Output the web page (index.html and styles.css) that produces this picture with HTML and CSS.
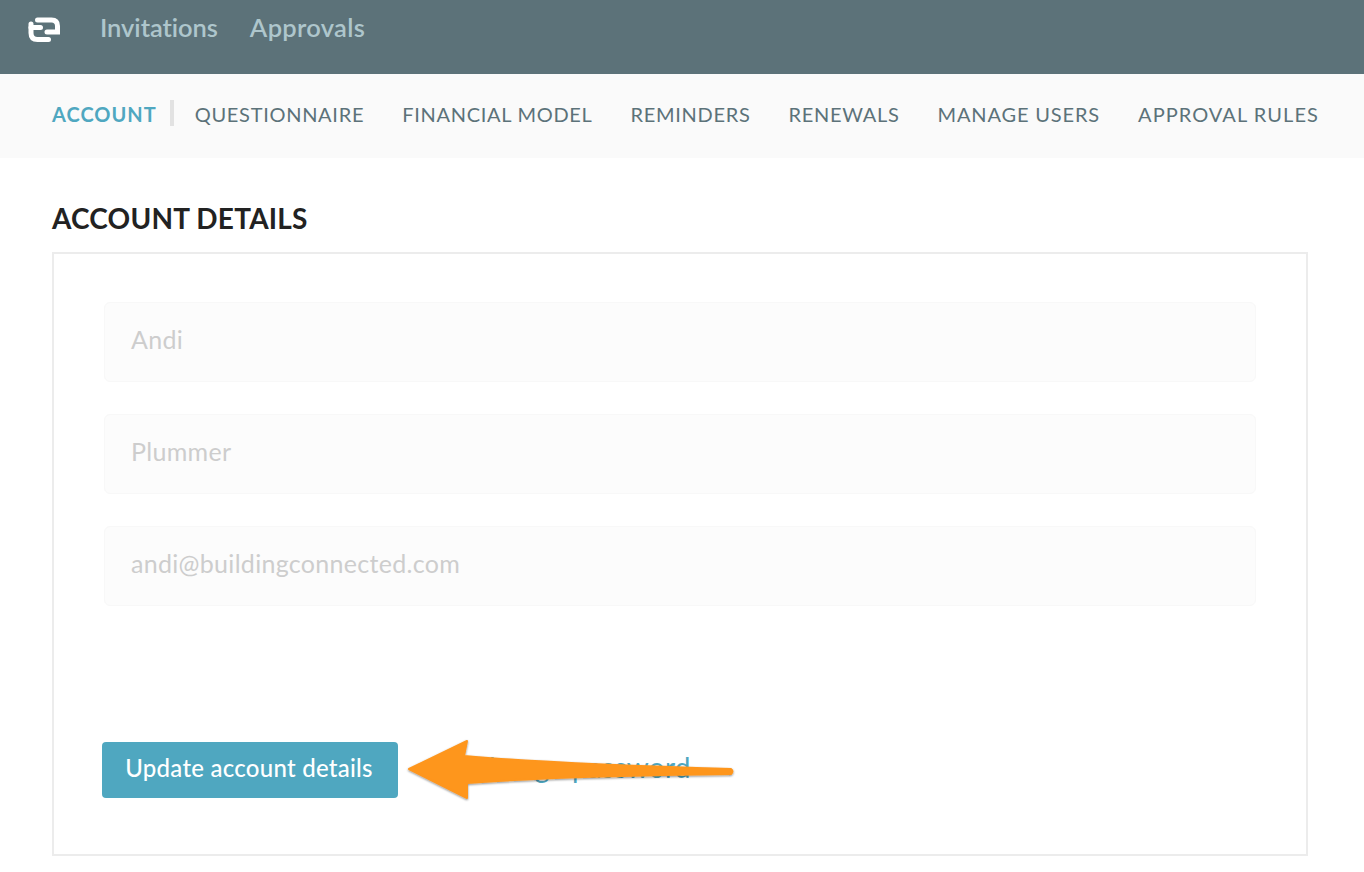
FILE: index.html
```html
<!DOCTYPE html>
<html lang="en">
<head>
<meta charset="utf-8">
<title>Account details</title>
<link rel="stylesheet" href="styles.css">
</head>
<body>
<header class="topbar">
  <svg class="logo" viewBox="0 0 34 28" width="34" height="28" aria-hidden="true">
    <path d="M10.500 6H24.500Q30.500 6 30.500 12V18H20" class="logo-stroke"/>
    <path d="M4 10V19Q4 25.500 10.500 25.500H21.500" class="logo-stroke"/>
    <path d="M4 13.500H13.500" class="logo-stroke"/>
  </svg>
  <nav class="mainnav">
    <a class="mainlink">Invitations</a>
    <a class="mainlink mainlink-wide">Approvals</a>
  </nav>
</header>
<nav class="subnav">
  <a class="tab tab-active">ACCOUNT</a>
  <a class="tab">QUESTIONNAIRE</a>
  <a class="tab">FINANCIAL MODEL</a>
  <a class="tab">REMINDERS</a>
  <a class="tab">RENEWALS</a>
  <a class="tab tab-wide">MANAGE USERS</a>
  <a class="tab tab-widest">APPROVAL RULES</a>
</nav>
<main class="content">
  <h1 class="title">ACCOUNT DETAILS</h1>
  <section class="panel">
    <div class="fields">
      <div class="field">Andi</div>
      <div class="field">Plummer</div>
      <div class="field">andi@buildingconnected.com</div>
    </div>
    <div class="actions">
      <button class="primary" type="button">Update account details</button>
      <a class="pwlink">Change password</a>
    </div>
  </section>
</main>
<svg class="arrow" viewBox="0 0 340 70" width="340" height="70" aria-hidden="true">
  <defs>
    <filter id="arrowshadow" x="-5%" y="-15%" width="110%" height="130%">
      <feDropShadow dx="0" dy="1" stdDeviation="1.200" flood-color="#000" flood-opacity="0.450"/>
    </filter>
  </defs>
  <path d="M3 30 L61 2 L58 17 Q150 25 325 30 Q328 32 325 35 Q150 37 61 44 L61 59 Z" fill="#fe961e" stroke="#fe961e" stroke-linejoin="round" stroke-width="2" filter="url(#arrowshadow)"/>
</svg>
</body>
</html>
```
FILE: styles.css
```css
* {
  box-sizing: border-box;
}

html, body {
  margin: 0;
  padding: 0;
}

body {
  position: relative;
  height: 872px;
  overflow: hidden;
  background: #fff;
  font-family: "Lato", "Liberation Sans", sans-serif;
}

.topbar {
  display: flex;
  align-items: center;
  height: 74px;
  padding: 0 0 18px 27px;
  background: #5c7279;
}

.logo {
  flex: none;
  margin-right: 39px;
}

.logo-stroke {
  fill: none;
  stroke: #fff;
  stroke-width: 5;
  stroke-linecap: round;
}

.mainnav {
  display: flex;
  gap: 32px;
}

.mainlink {
  margin-top: -2px;
  font-size: 25.500px;
  line-height: 32px;
  font-weight: 600;
  letter-spacing: -0.05px;
  color: #aec6cc;
}

.mainlink-wide {
  letter-spacing: 0.3px;
}

.subnav {
  display: flex;
  align-items: center;
  height: 84px;
  padding: 0 0 6px 52px;
  background: #fafafa;
}

.tab {
  margin-right: 38px;
  padding-top: 3px;
  font-size: 20px;
  line-height: 23px;
  letter-spacing: 0.7px;
  color: #5c7279;
  white-space: nowrap;
}

.tab-wide {
  letter-spacing: 0.85px;
}

.tab-widest {
  letter-spacing: 1.050px;
}

.tab-active {
  margin-right: 21px;
  padding-right: 13px;
  border-right: 4px solid #e2e2e2;
  font-weight: 700;
  letter-spacing: 1px;
  color: #4fa7c0;
}

.content {
  padding: 42px 56px 0 52px;
}

.title {
  margin: 0 0 16px;
  font-size: 28px;
  line-height: 36px;
  font-weight: 700;
  letter-spacing: 0.2px;
  color: #222;
}

.panel {
  height: 604px;
  padding: 48px 50px 0;
  border: 2px solid #ececec;
}

.fields {
  display: flex;
  flex-direction: column;
  gap: 32px;
  height: 440px;
}

.field {
  height: 80px;
  padding: 20px 26px 0;
  border: 1px solid #f8f8f8;
  border-radius: 6px;
  background: #fcfcfc;
  font-size: 25px;
  line-height: 32px;
  letter-spacing: 0.3px;
  color: #cdcdcd;
}

.actions {
  display: flex;
  align-items: center;
  margin-left: -2px;
}

.primary {
  width: 296px;
  height: 56px;
  margin-right: 72px;
  padding: 0 2px 5px 0;
  border: 0;
  border-radius: 4px;
  background: #4fa7c0;
  font-family: inherit;
  font-size: 24px;
  font-weight: 500;
  letter-spacing: 0.25px;
  color: #fff;
}

.pwlink {
  margin-top: -6px;
  font-size: 28px;
  line-height: 32px;
  letter-spacing: 0.25px;
  color: #4fa7c0;
}

.arrow {
  position: absolute;
  left: 406px;
  top: 739px;
}
```
